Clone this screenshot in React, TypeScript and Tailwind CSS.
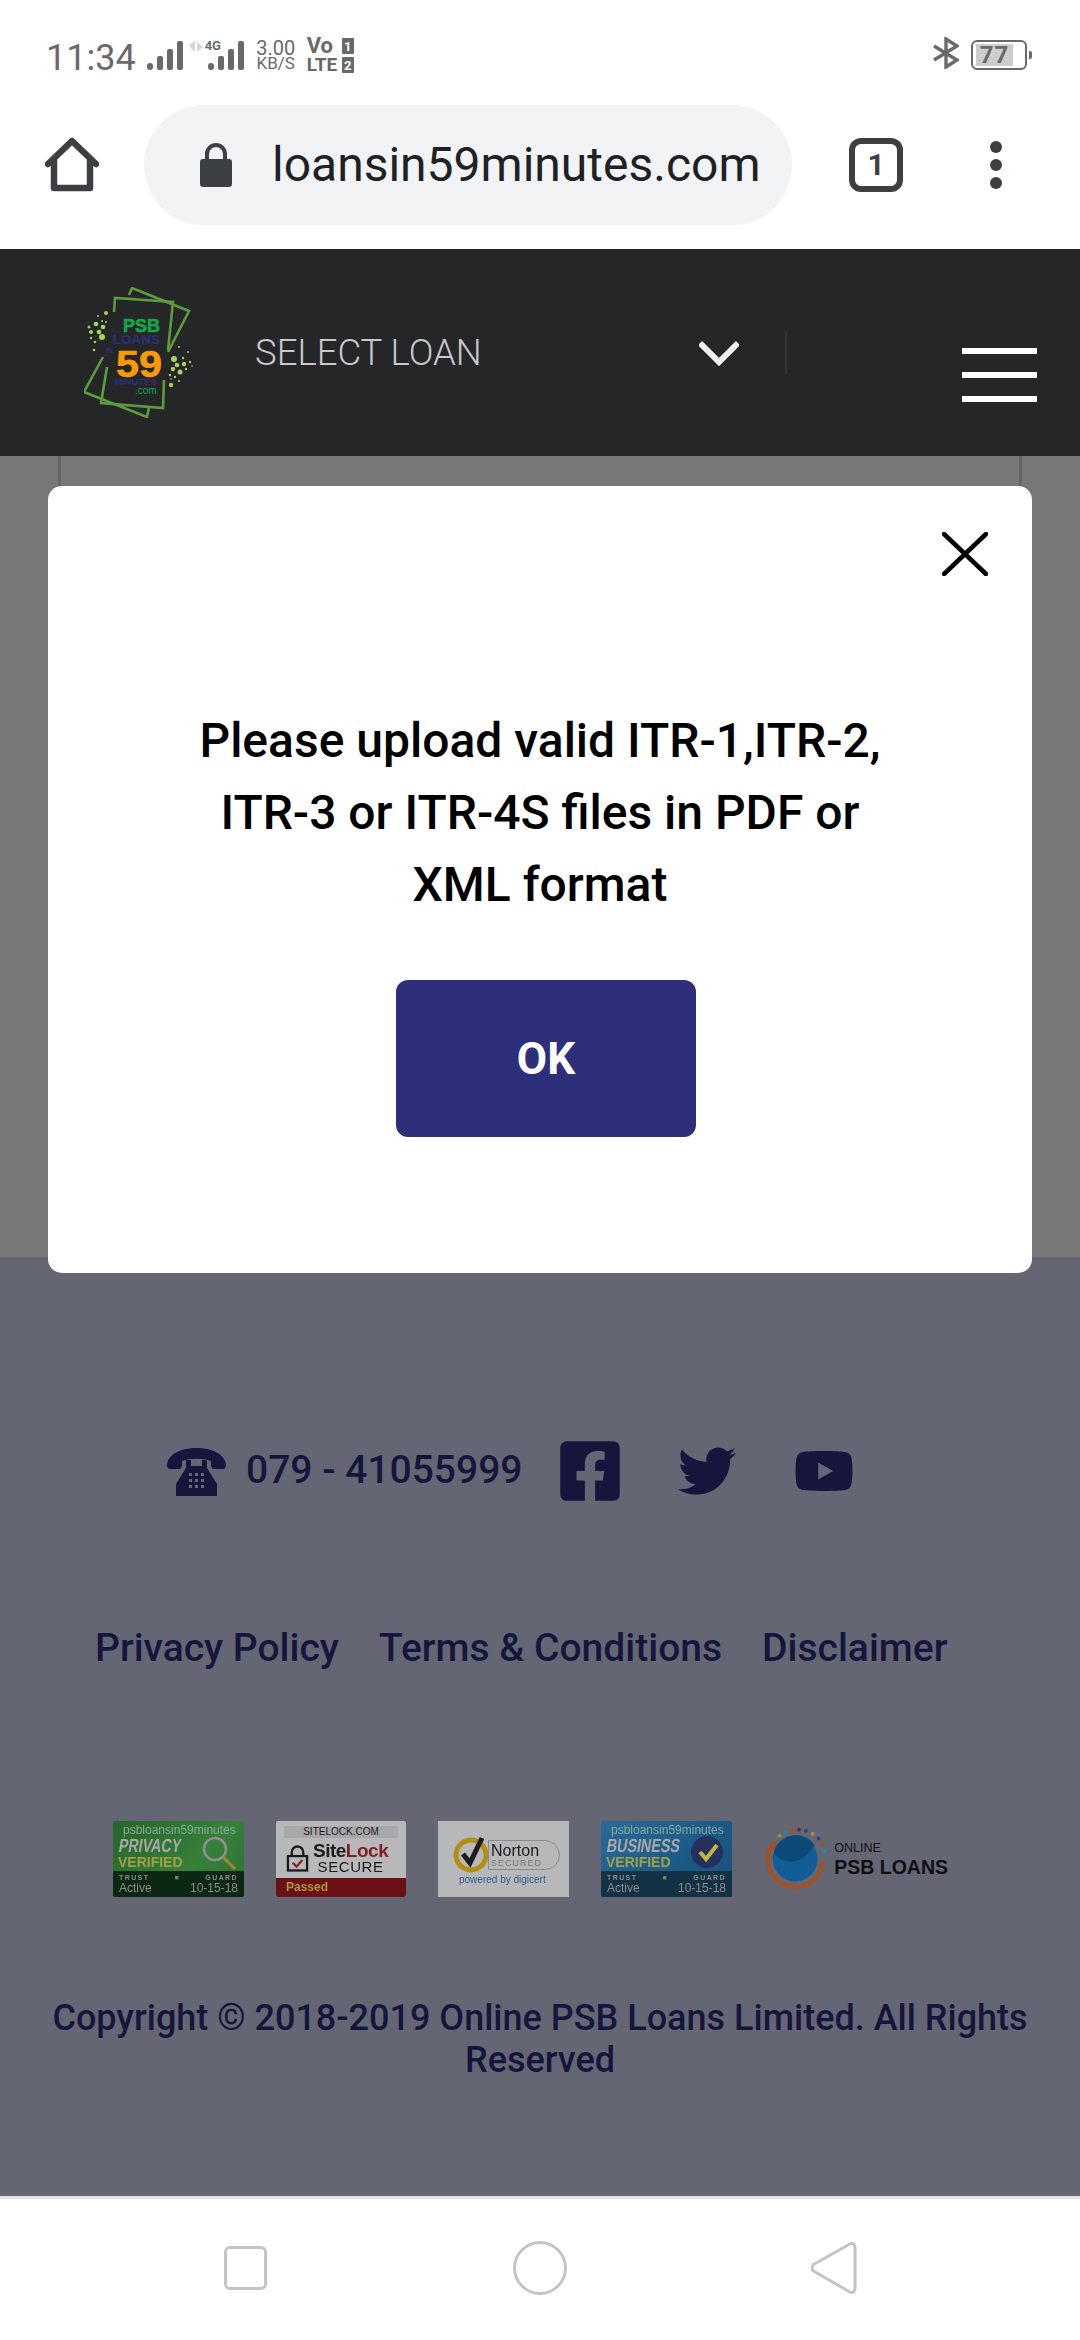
import { FaFacebookSquare, FaTwitter, FaYoutube } from "react-icons/fa";

const footerLinks = ["Privacy Policy", "Terms & Conditions", "Disclaimer"];

const logoDots = [
  [22, 26, 2], [12, 37, 2.3], [5, 40, 1.5], [19, 40, 2.3], [7, 45, 2], [15, 45, 2.3], [18, 50, 3], [7, 51, 1.2],
  [11, 55, 1.3], [10, 63, 1.3], [14, 29, 1], [18, 34, 1], [22, 35, 1], [90, 72, 3], [95, 60, 1], [104, 65, 1],
  [99, 71, 1.2], [93, 78, 2.3], [100, 77, 2.2], [106, 75, 1.2], [89, 82, 2.2], [96, 85, 2.5], [102, 82, 1.2],
  [108, 79, 0.8], [86, 88, 1.2], [91, 90, 1.2], [95, 94, 1], [87, 98, 2.2], [87, 92, 0.8],
];

const Bars = ({ className }: { className: string }) => (
  <svg viewBox="0 0 37 30" className={className} fill="#696969">
    <rect x="0" y="22" width="6" height="7" rx="3" />
    <rect x="10" y="15" width="6" height="14" rx="2" />
    <rect x="20" y="8" width="6" height="21" rx="2" />
    <rect x="30" y="0" width="6" height="29" rx="2" />
  </svg>
);

const StatusBar = () => (
  <div className="flex h-[105px] items-start justify-between pl-[46px] pr-[48px] pt-[37px] text-[#696969]">
    <div className="flex items-start">
      <span className="text-[36px] leading-[42px]">11:34</span>
      <Bars className="ml-[11px] mt-[4px] h-[30px] w-[37px]" />
      <svg viewBox="0 0 14 14" className="ml-[5px] mt-[3px] h-[14px] w-[14px]" fill="#d6d6d6">
        <path d="M6 0v12L0 6zM8 2l6 5-6 5z" />
      </svg>
      <div className="relative ml-[4px] mt-[4px] h-[30px] w-[39px]">
        <Bars className="h-[30px] w-[39px]" />
        <span className="absolute -left-[2px] -top-[2px] text-[13px] font-bold leading-[13px]">4G</span>
      </div>
      <div className="ml-[9px] flex w-[42px] flex-col items-center pt-[3px]">
        <span className="text-[20px] leading-[16px]">3.00</span>
        <span className="text-[17px] leading-[15px]">KB/S</span>
      </div>
      <div className="ml-[10px] flex w-[47px] flex-col gap-[3px] pt-[1px] font-bold">
        <div className="flex h-[16px] items-center justify-between">
          <span className="text-[22px] leading-[16px]">Vo</span>
          <span className="flex h-[16px] w-[12px] items-center justify-center rounded-[1px] bg-[#696969] text-[13px] leading-none text-white">1</span>
        </div>
        <div className="flex h-[16px] items-center justify-between">
          <span className="text-[19px] leading-[16px]">LTE</span>
          <span className="flex h-[16px] w-[12px] items-center justify-center rounded-[1px] bg-[#696969] text-[13px] leading-none text-white">2</span>
        </div>
      </div>
    </div>
    <div className="flex items-start">
      <svg viewBox="0 0 26 32" className="h-[32px] w-[26px]" fill="none" stroke="#696969" strokeWidth="3.4">
        <path d="M1 9l23 14-11 7V2l11 7L1 23" />
      </svg>
      <div className="relative ml-[12px] mt-[3px] flex h-[30px] w-[56px] items-center rounded-[6px] border-2 border-[#696969] pl-[3px]">
        <div className="flex h-[22px] w-[37px] items-center justify-center bg-[#cdcdcd] text-[24px] font-bold leading-none tracking-[1px]">77</div>
      </div>
      <div className="ml-[2px] mt-[14px] h-[8px] w-[3px] rounded-r-[2px] bg-[#696969]" />
    </div>
  </div>
);

const Toolbar = () => (
  <div className="flex h-[144px] items-start pl-[45px]">
    <svg viewBox="0 0 54 54" className="mt-[33px] h-[54px] w-[54px]" fill="none" stroke="#3c4043" strokeWidth="6.5" strokeLinejoin="round" strokeLinecap="round">
      <path d="M3 26L27 3l24 23M9 21v29h36V21" />
    </svg>
    <div className="ml-[45px] flex h-[120px] w-[648px] items-center rounded-full bg-[#f1f3f4] pl-[56px]">
      <svg viewBox="0 0 32 44" className="h-[44px] w-[32px]">
        <path d="M7 18v-7a9 9 0 0 1 18 0v7" fill="none" stroke="#3c4043" strokeWidth="4" />
        <rect x="0" y="16" width="32" height="28" rx="3" fill="#3c4043" />
      </svg>
      <span className="ml-[40px] text-[48px] leading-none text-[#202124]">loansin59minutes.com</span>
    </div>
    <div className="ml-[57px] mt-[33px] flex h-[54px] w-[54px] items-center justify-center rounded-[12px] border-[6.5px] border-[#3c4043] text-[30px] font-bold leading-none text-[#3c4043]">
      1
    </div>
    <div className="ml-[87px] mt-[36px] flex flex-col gap-[6px]">
      <span className="size-[12px] rounded-full bg-[#3c4043]" />
      <span className="size-[12px] rounded-full bg-[#3c4043]" />
      <span className="size-[12px] rounded-full bg-[#3c4043]" />
    </div>
  </div>
);

const SiteLogo = () => (
  <svg viewBox="0 0 111 131" className="h-[131px] w-[111px]">
    <g fill="none" stroke="#5d9c3a" strokeWidth="2.6">
      <path d="M45 8L48 1 105 24 84 65" />
      <path d="M19 70L0 105 63 130 65 120" />
      <path d="M30 25L31 11 89 15 84 63" />
      <path d="M80 93L79 121 17 116 23 80" />
    </g>
    <g fill="#a9d25a">
      {logoDots.map(([cx, cy, r]) => (
        <circle key={`${cx}-${cy}`} cx={cx} cy={cy} r={r} />
      ))}
    </g>
    <text x="76" y="45" textAnchor="end" fontFamily="Liberation Sans" fontWeight="700" fontSize="18" fill="#10a84a" stroke="#10a84a" strokeWidth="0.6">PSB</text>
    <text x="76" y="57" textAnchor="end" fontFamily="Liberation Sans" fontWeight="700" fontSize="13.5" fill="#2e2f7a">LOANS</text>
    <text x="22" y="66" fontFamily="Liberation Sans" fontWeight="700" fontSize="7" fill="#2e2f7a">IN</text>
    <text x="32" y="90" fontFamily="Liberation Sans" fontWeight="700" fontSize="37" fill="#fb9a07" stroke="#fb9a07" strokeWidth="0.6" textLength="46" lengthAdjust="spacingAndGlyphs">59</text>
    <text x="30" y="98" fontFamily="Liberation Sans" fontWeight="700" fontSize="9.600" fill="#2e2f7a">MINUTES</text>
    <text x="51" y="107" fontFamily="Liberation Sans" fontSize="10" fill="#10a84a">.com</text>
  </svg>
);

const Header = () => (
  <div className="flex h-[207px] items-start bg-[#252628] pl-[84px]">
    <div className="mt-[38px]">
      <SiteLogo />
    </div>
    <span className="ml-[60px] mt-[83px] text-[36.5px] font-light leading-[42px] text-[#c8c8c8]">SELECT LOAN</span>
    <svg viewBox="0 0 40 27" className="ml-[217px] mt-[90px] h-[27px] w-[40px]" fill="none" stroke="#f0f0f0" strokeWidth="6">
      <path d="M1 4l19 19L39 4" />
    </svg>
    <div className="ml-[46px] mt-[82px] h-[43px] w-[2px] bg-[#333436]" />
    <div className="ml-[175px] mt-[99px] flex w-[75px] flex-col gap-[18px]">
      <span className="h-[6px] bg-white" />
      <span className="h-[6px] bg-white" />
      <span className="h-[6px] bg-white" />
    </div>
  </div>
);

const TrustBadge = ({ title, business }: { title: string; business?: boolean }) => (
  <div
    className={
      business
        ? "relative flex h-[76px] w-[131px] flex-col overflow-hidden rounded-[2px] bg-[linear-gradient(135deg,#2a6a96,#1b5a86_60%,#17507a)] font-['Liberation_Sans',sans-serif] blur-[0.5px]"
        : "relative flex h-[76px] w-[131px] flex-col overflow-hidden rounded-[2px] bg-[linear-gradient(135deg,#25652a,#37803a_60%,#2b7230)] font-['Liberation_Sans',sans-serif] blur-[0.5px]"
    }
  >
    <span className="pl-[10px] pt-[2px] text-[12px] leading-[14px] text-[#88aa98]">psbloansin59minutes</span>
    <span className="origin-left -skew-x-12 scale-x-75 pl-[8px] text-[19px] font-bold leading-[18px] text-[#a8a8a8]">{title}</span>
    <span className="pl-[5px] text-[14px] font-bold leading-[15px] text-[#a0a044]">VERIFIED</span>
    <div className={business ? "mt-auto flex h-[26px] flex-col justify-center bg-[#143246] px-[6px] text-[#8c8c8c]" : "mt-auto flex h-[26px] flex-col justify-center bg-[#0c2812] px-[6px] text-[#8c8c8c]"}>
      <div className="flex justify-between text-[7px] font-bold leading-[9px] tracking-[1.4px]">
        <span>TRUST</span>
        <span className="text-[#4f9a52]">■</span>
        <span>GUARD</span>
      </div>
      <div className="flex justify-between text-[12px] leading-[13px]">
        <span>Active</span>
        <span>10-15-18</span>
      </div>
    </div>
    <svg viewBox="0 0 36 36" className="absolute right-[7px] top-[14px] h-[36px] w-[36px]" fill="none">
      {business ? (
        <>
          <circle cx="18" cy="17" r="16" fill="#25305c" />
          <path d="M11 17l6 7 11-14" stroke="#c3b63a" strokeWidth="4" />
        </>
      ) : (
        <>
          <circle cx="14" cy="14" r="11" stroke="#8f8f8f" strokeWidth="2.5" />
          <path d="M22 22l12 12" stroke="#a5853c" strokeWidth="3" />
        </>
      )}
    </svg>
  </div>
);

const SiteLockBadge = () => (
  <div className="flex h-[76px] w-[130px] flex-col overflow-hidden rounded-[2px] bg-[#b8b8bb] font-['Liberation_Sans',sans-serif] blur-[0.5px]">
    <span className="mx-[8px] mt-[5px] bg-[#a8a8ab] text-center text-[10px] leading-[12px] text-[#1b1b1d]">SITELOCK.COM</span>
    <div className="flex flex-1 items-center pl-[10px]">
      <svg viewBox="0 0 24 28" className="h-[28px] w-[23px]" fill="none" stroke="#1b1b1d" strokeWidth="2.4">
        <path d="M6 12V8a6 6 0 0 1 12 0v4" />
        <rect x="2" y="12" width="20" height="15" />
        <path d="M7 19l4 4 6-7" stroke="#8a2020" />
      </svg>
      <div className="ml-[4px] flex flex-col items-center">
        <span className="text-[19px] font-bold leading-[18px] tracking-[-0.5px] text-[#1b1b1d]">
          Site<span className="text-[#7f1f1f]">Lock</span>
        </span>
        <span className="text-[15px] leading-[14px] tracking-[0.6px] text-[#1b1b1d]">SECURE</span>
      </div>
    </div>
    <span className="h-[19px] bg-[#6b1014] pl-[10px] text-[12px] font-bold leading-[19px] text-[#a89a3a]">Passed</span>
  </div>
);

const NortonBadge = () => (
  <div className="flex h-[76px] w-[131px] flex-col items-start bg-[#b8b8bb] pl-[14px] pt-[10px] font-['Liberation_Sans',sans-serif] blur-[0.5px]">
    <div className="flex items-center">
      <svg viewBox="0 0 38 42" className="h-[42px] w-[38px]" fill="none">
        <circle cx="19" cy="24" r="15" stroke="#b28f10" strokeWidth="5" />
        <path d="M11 23l7 9 12-25" stroke="#1b1b1d" strokeWidth="5" />
      </svg>
      <div className="-ml-[2px] mt-[6px] flex h-[30px] w-[72px] flex-col justify-center rounded-r-full border border-[#8b8b8e] pl-[2px]">
        <span className="text-[16px] leading-[15px] text-[#1b1b1d]">Norton</span>
        <span className="text-[9px] leading-[10px] tracking-[1px] text-[#77777a]">SECURED</span>
      </div>
    </div>
    <span className="ml-[7px] text-[10px] leading-[14px] text-[#2c5c8a]">powered by digicert</span>
  </div>
);

const PsbLoansLogo = () => (
  <div className="flex h-[64px] w-[184px] items-center font-['Liberation_Sans',sans-serif]">
    <svg viewBox="0 0 66 64" className="h-[64px] w-[66px]" fill="none">
      <path d="M60 35A28 28 0 1 1 9 17" stroke="#a94f1e" strokeWidth="4" />
      <path d="M4 21l8-8 2 9z" fill="#a94f1e" />
      <circle cx="32" cy="32" r="23" fill="#125d96" />
      <path d="M10 26c12 14 30 12 42-8a23 23 0 0 0-42 8z" fill="#0c4a78" />
      <circle cx="16" cy="8" r="2" fill="#a3912a" />
      <circle cx="22" cy="5" r="2" fill="#2a86a8" />
      <circle cx="29" cy="3" r="2" fill="#a94f1e" />
      <circle cx="36" cy="2" r="2" fill="#7a1f3a" />
      <circle cx="43" cy="3" r="2" fill="#1d4a80" />
      <circle cx="50" cy="6" r="2" fill="#a3912a" />
      <circle cx="56" cy="11" r="2" fill="#5a2d80" />
      <circle cx="60" cy="17" r="2" fill="#a94f1e" />
      <circle cx="62" cy="24" r="2" fill="#2a86a8" />
    </svg>
    <div className="ml-[6px] flex flex-col">
      <span className="text-[12.5px] leading-[14px] text-[#0e0e10]">ONLINE</span>
      <span className="mt-[2px] whitespace-nowrap text-[19.5px] font-bold leading-[20px] text-[#0e0e10]">PSB LOANS</span>
    </div>
  </div>
);

const Footer = () => (
  <div className="flex h-[939px] flex-col bg-[#646674] text-[#16163c]">
    <div className="ml-[167px] mt-[184px] flex h-[59px] items-center">
      <svg viewBox="0 0 59 48" className="mb-[-3px] h-[48px] w-[59px]" fill="#16163c">
        <path d="M0 17C1 6 14 0 29.500 0S58 6 59 17c0 2-1 4-3 4h-9c-2 0-3-2-3-4v-4c-8-3-21-3-29 0v4c0 2-1 4-3 4H3c-2 0-3-2-3-4z" />
        <path fillRule="evenodd" d="M19 12h5v6h11v-6h5v8l10 16v12H9V36l10-16zM22 25v3h3v-3zM28 25v3h3v-3zM34 25v3h3v-3zM22 31v3h3v-3zM28 31v3h3v-3zM34 31v3h3v-3zM22 37v3h3v-3zM28 37v3h3v-3zM34 37v3h3v-3z" />
      </svg>
      <span className="ml-[20px] text-[39px] font-medium leading-none">079 - 41055999</span>
      <FaFacebookSquare className="ml-[38px] h-[68px] w-[60px]" />
      <FaTwitter className="ml-[58px] h-[58px] w-[58px]" />
      <FaYoutube className="ml-[58px] h-[60px] w-[60px]" />
    </div>
    <div className="ml-[95px] mt-[124px] flex h-[48px] items-center gap-[40px] text-[39px] font-medium leading-none">
      {footerLinks.map((link) => (
        <span key={link}>{link}</span>
      ))}
    </div>
    <div className="ml-[113px] mt-[149px] flex items-center gap-[32px]">
      <TrustBadge title="PRIVACY" />
      <SiteLockBadge />
      <NortonBadge />
      <TrustBadge title="BUSINESS" business />
      <PsbLoansLogo />
    </div>
    <p className="mt-[100px] px-[50px] text-center text-[36px] font-medium leading-[42px]">
      Copyright © 2018-2019 Online PSB Loans Limited. All Rights Reserved
    </p>
  </div>
);

const Modal = () => (
  <div className="absolute left-[48px] top-[486px] flex h-[787px] w-[984px] flex-col items-center rounded-[14px] bg-white">
    <svg viewBox="0 0 46 44" className="mr-[44px] mt-[46px] h-[44px] w-[46px] self-end" fill="none" stroke="#000" strokeWidth="4.500" strokeLinecap="round">
      <path d="M2 2l42 40M44 2L2 42" />
    </svg>
    <p className="mt-[129px] w-[720px] text-center text-[48px] font-medium leading-[72px] text-black">
      Please upload valid ITR-1,ITR-2, ITR-3 or ITR-4S files in PDF or XML format
    </p>
    <button className="ml-[12px] mt-[59px] flex h-[157px] w-[300px] items-center justify-center rounded-[12px] bg-[#2e2f7a] text-[44px] font-bold text-white">
      OK
    </button>
  </div>
);

const NavBar = () => (
  <div className="flex h-[144px] flex-col border-t-[3px] border-[#e4e4e4] bg-white">
    <div className="mt-[42px] flex items-center pl-[224px]">
      <div className="h-[44px] w-[43px] rounded-[6px] border-[3px] border-[#c4c4c4]" />
      <div className="ml-[246px] h-[54px] w-[54px] rounded-full border-[3px] border-[#c4c4c4]" />
      <svg viewBox="0 0 46 52" className="ml-[244px] h-[52px] w-[46px]" fill="none" stroke="#c4c4c4" strokeWidth="3" strokeLinejoin="round">
        <path d="M2.500 22.500L38 2.500q6-3 6 4v39q0 7-6 4L2.500 29q-3-3 0-6.500z" />
      </svg>
    </div>
  </div>
);

export default function App() {
  return (
    <div className="relative flex h-[2340px] w-[1080px] flex-col overflow-hidden bg-white font-['Roboto',sans-serif]">
      <StatusBar />
      <Toolbar />
      <Header />
      <div className="h-[801px] bg-[#787878] px-[58px]">
        <div className="h-full border-x-[3px] border-[#666666]" />
      </div>
      <Footer />
      <NavBar />
      <Modal />
    </div>
  );
}
